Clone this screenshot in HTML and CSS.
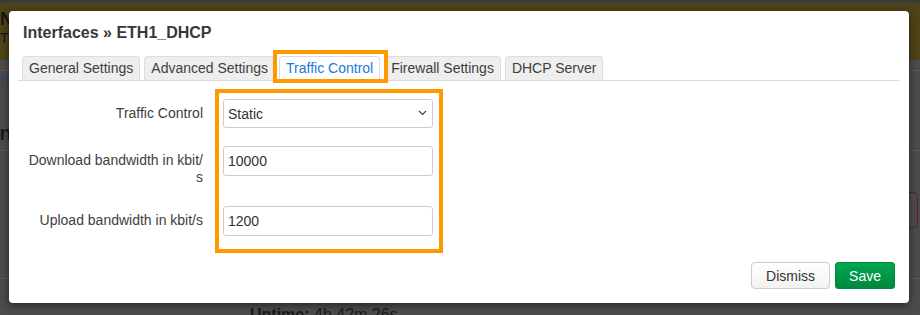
FILE: index.html
```html
<!DOCTYPE html>
<html lang="en">
  <head>
    <meta charset="UTF-8" />
    <meta name="viewport" content="width=device-width, initial-scale=1.0" />
    <title>Interfaces - ETH1_DHCP</title>
    <link rel="stylesheet" href="styles.css">
  </head>
  <body>
    <!-- dimmed page behind the dialog -->
    <div class="page">
      <div class="alert">
        <h4 class="alert-title">No password set!</h4>
        <p class="alert-text">There is no password set on this router.</p>
      </div>
      <div class="menu"></div>
      <div class="crumb">m</div>
      <h2 class="section-title">Interfaces</h2>
      <div class="action-row">
        <span class="ghost-btn"></span>
      </div>
      <div class="divider"></div>
      <p class="uptime"><b>Uptime:</b> 4h 42m 26s</p>
    </div>

    <div class="modal">
      <h3 class="modal-title">Interfaces » ETH1_DHCP</h3>

      <ul class="tabs">
        <li class="tab">General Settings</li>
        <li class="tab">Advanced Settings</li>
        <li class="tab active">Traffic Control</li>
        <li class="tab">Firewall Settings</li>
        <li class="tab">DHCP Server</li>
        <li class="mark tab-mark"></li>
      </ul>

      <div class="form">
        <label class="field-label">Traffic Control</label>
        <div class="select-wrap">
          <select class="field">
            <option>Static</option>
          </select>
          <svg class="chevron" width="9" height="6" viewBox="0 0 9 6">
            <path d="M1 1l3.5 3.5L8 1" fill="none" stroke="#444" stroke-width="1.2" />
          </svg>
        </div>

        <label class="field-label">Download bandwidth in kbit/<wbr>s</label>
        <input class="field" type="text" value="10000" />

        <label class="field-label">Upload bandwidth in kbit/s</label>
        <input class="field" type="text" value="1200" />

        <span class="mark form-mark"></span>
      </div>

      <div class="modal-footer">
        <button class="btn">Dismiss</button>
        <button class="btn btn-save">Save</button>
      </div>
    </div>
  </body>
</html>
```

FILE: styles.css
```css
:root {
  --backdrop: #4c4c4c;
  --backdrop-line: #5c5c5c;
  --text: #404040;
  --border: #dddddd;
  --mark: #ff9900;
}

* {
  box-sizing: border-box;
}

body {
  margin: 0;
  height: 315px;
  overflow: hidden;
  background: var(--backdrop);
  font-family: "Liberation Sans", Arial, sans-serif;
  font-size: 14px;
  color: var(--text);
}

/* page behind the overlay */
.alert {
  height: 60px;
  padding-top: 6px;
  background: #4f4418;
  border-top: 3px solid #3b3b3b;
  color: #161616;
}

.alert-title {
  margin: 0;
  font-size: 18px;
  line-height: 20px;
}

.alert-text {
  margin: 1px 0 0;
  line-height: 17px;
}

.menu {
  height: 11px;
  border-bottom: 1px solid var(--backdrop-line);
}

.crumb {
  line-height: 17px;
  color: #2b4d72;
}

.section-title {
  margin: 33px 0 0;
  padding-bottom: 5px;
  font-size: 20px;
  line-height: 24px;
  text-indent: -6px;
  color: #1a1a1a;
  border-bottom: 1px solid var(--backdrop-line);
}

.action-row {
  display: flex;
  justify-content: flex-end;
  margin-top: 41px;
}

.ghost-btn {
  width: 70px;
  height: 36px;
  margin-right: 2px;
  border: 1px solid #6a1d1d;
  border-radius: 4px;
}

.divider {
  margin-top: 50px;
  border-top: 1px solid var(--backdrop-line);
}

.uptime {
  margin: 26px 0 0 250px;
  font-size: 16px;
  line-height: 20px;
  color: #1a1a1a;
}

/* dialog */
.modal {
  position: absolute;
  left: 9px;
  top: 11px;
  width: 900px;
  height: 292px;
  display: flex;
  flex-direction: column;
  background: #fff;
  border-radius: 4px;
  box-shadow: 0 2px 8px rgba(0, 0, 0, 0.55);
}

.modal-title {
  margin: 0;
  padding: 12px 14px 0;
  font-size: 16px;
  line-height: 20px;
  color: #383838;
}

.tabs {
  position: relative;
  display: flex;
  gap: 4px;
  margin: 13px 9px 0;
  padding: 0 0 0 4px;
  list-style: none;
  border-bottom: 1px solid var(--border);
}

.tab {
  padding: 0 6px;
  line-height: 23px;
  background: #eeeeee;
  border: 1px solid var(--border);
  border-bottom: 0;
  border-radius: 4px 4px 0 0;
  white-space: nowrap;
}

.tab.active {
  background: #fff;
  color: #2477d6;
  margin-bottom: -1px;
  padding-bottom: 1px;
}

/* orange highlight frames */
.mark {
  position: absolute;
  border: 4px solid var(--mark);
  pointer-events: none;
}

.tab-mark {
  left: 255px;
  top: -6px;
  width: 115px;
  height: 33px;
}

.form {
  position: relative;
  display: grid;
  grid-template-columns: 178px 210px;
  column-gap: 20px;
  row-gap: 18px;
  align-items: start;
  padding: 18px 0 0 16px;
}

.field-label {
  padding: 6px 0 2px;
  line-height: 17px;
  text-align: right;
}

.field {
  width: 210px;
  height: 30px;
  padding: 0 4px;
  border: 1px solid #cccccc;
  border-radius: 3px;
  background: #fff;
  font-family: inherit;
  font-size: 14px;
  color: #333;
  outline: none;
}

.select-wrap {
  position: relative;
}

.select-wrap .field {
  height: 29px;
  appearance: none;
  -webkit-appearance: none;
}

.chevron {
  position: absolute;
  right: 6px;
  top: 11px;
}

.form-mark {
  left: 206px;
  top: 8px;
  width: 228px;
  height: 164px;
}

.modal-footer {
  display: flex;
  justify-content: flex-end;
  gap: 5px;
  margin-top: auto;
  padding: 0 14px 14px;
}

.btn {
  height: 27px;
  padding: 0 14px;
  font-family: inherit;
  font-size: 14px;
  color: #333;
  background: linear-gradient(#ffffff, #f2f2f2);
  border: 1px solid #cccccc;
  border-radius: 4px;
}

.btn-save {
  padding: 0 13px;
  color: #fff;
  background: linear-gradient(#00a650, #00883f);
  border-color: #008a40;
  border-radius: 3px;
}
```
